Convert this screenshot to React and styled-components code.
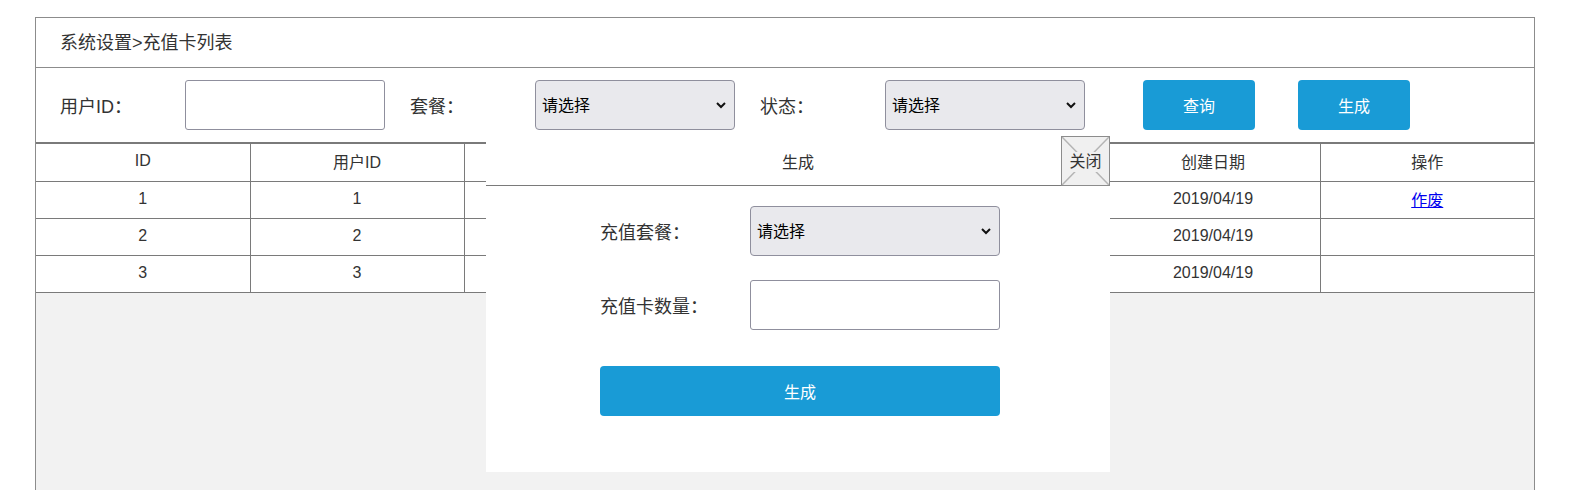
import React from "react";
import styled, { createGlobalStyle } from "styled-components";

const Global = createGlobalStyle`
  html, body { margin: 0; padding: 0; overflow: hidden; background: #fff; }
  body { font-family: "Liberation Sans", "Noto Sans CJK SC", sans-serif; color: #333; }
  * { box-sizing: border-box; }
`;

const Page = styled.div`
  padding: 17px 0 0 35px;
`;

const Frame = styled.div`
  position: relative;
  width: 1500px;
  height: 480px;
  border: 1px solid #8c8c8c;
  border-bottom: none;
  background: #f2f2f2;
  display: flex;
  flex-direction: column;
`;

const TitleBar = styled.div`
  height: 50px;
  flex: none;
  background: #fff;
  border-bottom: 1px solid #8c8c8c;
  display: flex;
  align-items: center;
  padding: 0 0 3px 24px;
  font-size: 18px;
  color: #333;
`;

const FilterBar = styled.div`
  height: 74px;
  flex: none;
  background: #fff;
  display: flex;
  align-items: center;
  padding-left: 24px;
`;

const Label = styled.span`
  width: ${(p) => p.$w || 125}px;
  flex: none;
  font-size: 18px;
  color: #333;
`;

const TextInput = styled.input`
  width: ${(p) => p.$w || 200}px;
  height: 50px;
  flex: none;
  border: 1px solid #8f8f9d;
  border-radius: 3px;
  background: #fff;
  margin-right: ${(p) => p.$mr || 0}px;
  font-size: 16px;
  padding: 0 8px;
  outline: none;
`;

const SelectWrap = styled.div`
  position: relative;
  width: ${(p) => p.$w || 200}px;
  height: 50px;
  flex: none;
  margin-right: ${(p) => p.$mr || 0}px;
`;

const Select = styled.select`
  appearance: none;
  width: 100%;
  height: 100%;
  border: 1px solid #8f8f9d;
  border-radius: 4px;
  background: #e9e9ed;
  color: #000;
  font-family: "Liberation Sans", "Noto Sans CJK SC", sans-serif;
  font-size: 16px;
  padding: 0 6px;
  outline: none;
`;

const Chevron = styled.svg`
  position: absolute;
  right: 8px;
  top: 50%;
  margin-top: -5px;
  pointer-events: none;
`;

const Button = styled.button`
  flex: none;
  width: ${(p) => p.$w || 112}px;
  height: 50px;
  margin-left: ${(p) => p.$ml || 0}px;
  margin-top: ${(p) => p.$mt || 0}px;
  border: none;
  border-radius: 4px;
  background: #199bd6;
  color: #fff;
  font-family: "Liberation Sans", "Noto Sans CJK SC", sans-serif;
  font-size: 16px;
  cursor: pointer;
`;

const Table = styled.table`
  width: 1498px;
  flex: none;
  border-collapse: collapse;
  table-layout: fixed;
  background: #fff;
  border-top: 2px solid #7a7a7a;
  font-size: 16px;
  color: #333;
`;

const Th = styled.th`
  height: 38px;
  padding: 0 0 2px;
  font-weight: normal;
  border: 1px solid #7a7a7a;
  border-top: none;
  text-align: center;
  &:first-child { border-left: none; }
  &:last-child { border-right: none; }
`;

const Td = styled.td`
  height: 37px;
  padding: 0 0 2px;
  border: 1px solid #7a7a7a;
  text-align: center;
  &:first-child { border-left: none; }
  &:last-child { border-right: none; }
`;

const Link = styled.a`
  color: #0000ee;
  text-decoration: underline;
  cursor: pointer;
`;

const Modal = styled.div`
  position: absolute;
  left: 450px;
  top: 118px;
  width: 624px;
  height: 336px;
  background: #fff;
  display: flex;
  flex-direction: column;
`;

const ModalHeader = styled.div`
  position: relative;
  height: 50px;
  flex: none;
  border-bottom: 1px solid #7a7a7a;
  display: flex;
  align-items: center;
  justify-content: center;
  font-size: 16px;
  color: #333;
`;

const CloseBtn = styled.button`
  position: absolute;
  right: 0;
  top: 0;
  width: 49px;
  height: 50px;
  padding: 0;
  border: 1px solid #8c8c8c;
  background: #f0f0f0;
  display: flex;
  align-items: center;
  justify-content: center;
  font-family: "Liberation Sans", "Noto Sans CJK SC", sans-serif;
  font-size: 16px;
  color: #333;
  cursor: pointer;
`;

const CloseCross = styled.svg`
  position: absolute;
  inset: 0;
`;

const CloseText = styled.span`
  position: relative;
  background: #f0f0f0;
  line-height: 20px;
  margin-top: 2px;
`;

const ModalBody = styled.div`
  padding: 20px 0 0 114px;
  display: flex;
  flex-direction: column;
  gap: 24px;
`;

const FormRow = styled.div`
  display: flex;
  align-items: center;
`;

const caret = (
  <Chevron width="12" height="10" viewBox="0 0 12 10">
    <polyline points="2,3 6,7 10,3" fill="none" stroke="#111" strokeWidth="2" />
  </Chevron>
);

const rows = [1, 2, 3];
const headers = ["ID", "用户ID", "", "", "", "创建日期", "操作"];

export default function App() {
  return (
    <Page>
      <Global />
      <Frame>
        <TitleBar>系统设置&gt;充值卡列表</TitleBar>
        <FilterBar>
          <Label>用户ID：</Label>
          <TextInput $mr={25} />
          <Label>套餐：</Label>
          <SelectWrap $mr={25}>
            <Select defaultValue="">
              <option value="">请选择</option>
            </Select>
            {caret}
          </SelectWrap>
          <Label>状态：</Label>
          <SelectWrap>
            <Select defaultValue="">
              <option value="">请选择</option>
            </Select>
            {caret}
          </SelectWrap>
          <Button $ml={58}>查询</Button>
          <Button $ml={43}>生成</Button>
        </FilterBar>
        <Table>
          <thead>
            <tr>
              {headers.map((h, i) => (
                <Th key={i}>{h}</Th>
              ))}
            </tr>
          </thead>
          <tbody>
            {rows.map((r) => (
              <tr key={r}>
                <Td>{r}</Td>
                <Td>{r}</Td>
                <Td />
                <Td />
                <Td />
                <Td>2019/04/19</Td>
                <Td>{r === 1 ? <Link>作废</Link> : null}</Td>
              </tr>
            ))}
          </tbody>
        </Table>
        <Modal>
          <ModalHeader>
            生成
            <CloseBtn>
              <CloseCross width="47" height="48" viewBox="0 0 47 48">
                <line x1="0" y1="0" x2="47" y2="48" stroke="#b4b4b4" strokeWidth="1.5" />
                <line x1="47" y1="0" x2="0" y2="48" stroke="#b4b4b4" strokeWidth="1.5" />
              </CloseCross>
              <CloseText>关闭</CloseText>
            </CloseBtn>
          </ModalHeader>
          <ModalBody>
            <FormRow>
              <Label $w={150}>充值套餐：</Label>
              <SelectWrap $w={250}>
                <Select defaultValue="">
                  <option value="">请选择</option>
                </Select>
                {caret}
              </SelectWrap>
            </FormRow>
            <FormRow>
              <Label $w={150}>充值卡数量：</Label>
              <TextInput $w={250} />
            </FormRow>
            <FormRow>
              <Button $w={400} $mt={12}>生成</Button>
            </FormRow>
          </ModalBody>
        </Modal>
      </Frame>
    </Page>
  );
}
